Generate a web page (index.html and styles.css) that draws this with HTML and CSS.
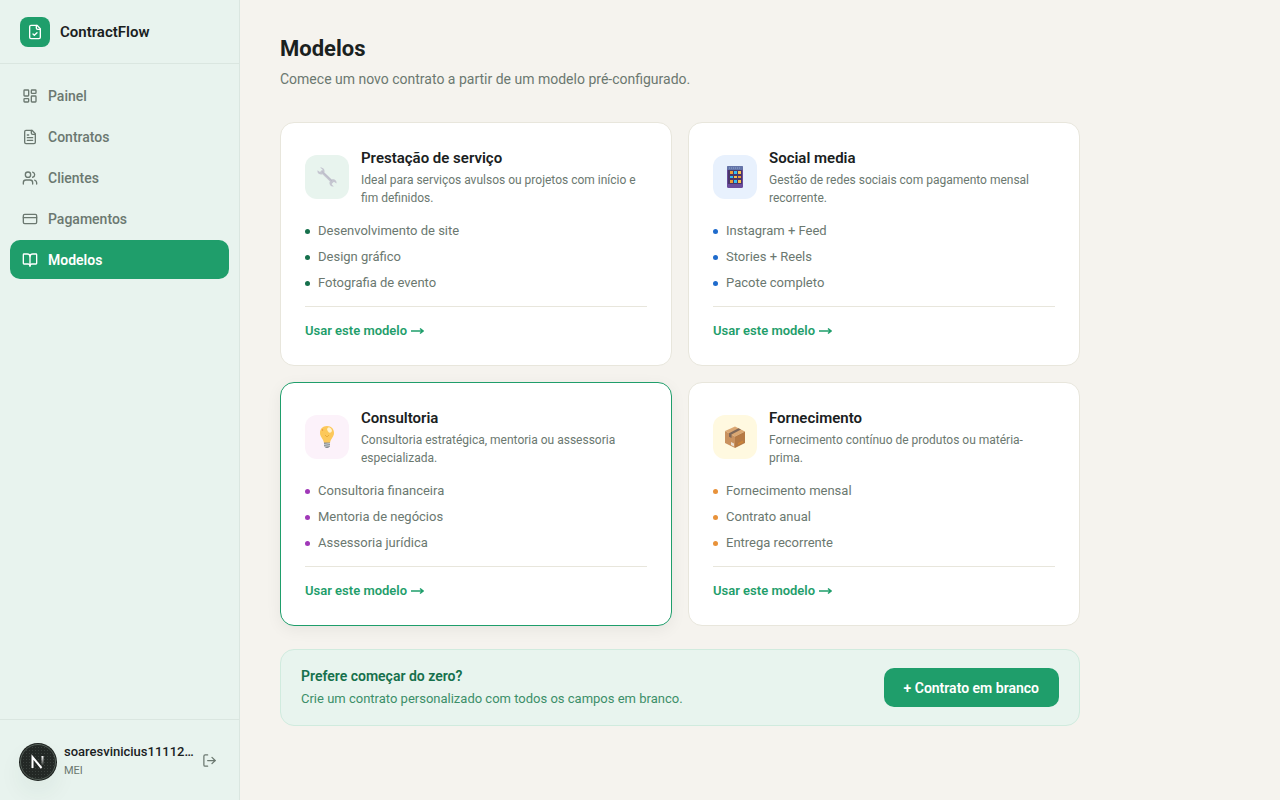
FILE: index.html
```html
<!DOCTYPE html>
<html lang="pt-BR">
<head>
    <meta charset="UTF-8">
    <meta name="viewport" content="width=device-width, initial-scale=1.0">
    <title>ContractFlow - Modelos</title>
    <link rel="stylesheet" href="styles.css">
</head>
<body>

<aside class="sidebar">
    <div class="brand">
        <span class="brand-logo">
            <svg class="icon" width="16" height="16" viewBox="0 0 24 24"><path d="M15 2H6a2 2 0 0 0-2 2v16a2 2 0 0 0 2 2h12a2 2 0 0 0 2-2V7Z"/><path d="M14 2v4a2 2 0 0 0 2 2h4"/><path d="m9 15 2 2 4-4"/></svg>
        </span>
        <span class="brand-name">ContractFlow</span>
    </div>

    <nav class="nav">
        <a href="#painel">
            <svg class="icon" width="16" height="16" viewBox="0 0 24 24"><rect x="3" y="3" width="7" height="9" rx="1"/><rect x="14" y="3" width="7" height="5" rx="1"/><rect x="14" y="12" width="7" height="9" rx="1"/><rect x="3" y="16" width="7" height="5" rx="1"/></svg>
            Painel
        </a>
        <a href="#contratos">
            <svg class="icon" width="16" height="16" viewBox="0 0 24 24"><path d="M15 2H6a2 2 0 0 0-2 2v16a2 2 0 0 0 2 2h12a2 2 0 0 0 2-2V7Z"/><path d="M14 2v4a2 2 0 0 0 2 2h4"/><path d="M10 9H8"/><path d="M16 13H8"/><path d="M16 17H8"/></svg>
            Contratos
        </a>
        <a href="#clientes">
            <svg class="icon" width="16" height="16" viewBox="0 0 24 24"><path d="M16 21v-2a4 4 0 0 0-4-4H6a4 4 0 0 0-4 4v2"/><circle cx="9" cy="7" r="4"/><path d="M22 21v-2a4 4 0 0 0-3-3.87"/><path d="M16 3.13a4 4 0 0 1 0 7.75"/></svg>
            Clientes
        </a>
        <a href="#pagamentos">
            <svg class="icon" width="16" height="16" viewBox="0 0 24 24"><rect x="2" y="5" width="20" height="14" rx="2"/><path d="M2 10h20"/></svg>
            Pagamentos
        </a>
        <a href="#modelos" class="active">
            <svg class="icon" width="16" height="16" viewBox="0 0 24 24"><path d="M12 7v14"/><path d="M3 18a1 1 0 0 1-1-1V4a1 1 0 0 1 1-1h5a4 4 0 0 1 4 4 4 4 0 0 1 4-4h5a1 1 0 0 1 1 1v13a1 1 0 0 1-1 1h-6a3 3 0 0 0-3 3 3 3 0 0 0-3-3z"/></svg>
            Modelos
        </a>
    </nav>

    <div class="user">
        <button class="avatar" aria-label="Conta">
            <svg width="38" height="38" viewBox="0 0 38 38">
                <defs>
                    <pattern id="dots" width="3" height="3" patternUnits="userSpaceOnUse"><rect x="1" y="1" width="1" height="1" fill="#3a413d"/></pattern>
                    <linearGradient id="fade" x1="0" y1="0" x2="0" y2="1"><stop offset="0" stop-color="#fff"/><stop offset="1" stop-color="#fff" stop-opacity="0.1"/></linearGradient>
                </defs>
                <circle cx="19" cy="19" r="19" fill="#1c211e"/>
                <circle cx="19" cy="19" r="17.5" fill="#232825" stroke="#56615a"/>
                <circle cx="19" cy="19" r="17" fill="url(#dots)"/>
                <path d="M13.500 25V14L22.500 25" fill="none" stroke="#fff" stroke-width="2"/>
                <rect x="22.500" y="13" width="2" height="9" fill="url(#fade)"/>
            </svg>
        </button>
        <div class="user-info">
            <div class="user-name">soaresvinicius11112…</div>
            <div class="user-plan">MEI</div>
        </div>
        <button class="logout" aria-label="Sair">
            <svg class="icon" width="15" height="15" viewBox="0 0 24 24"><path d="M9 21H5a2 2 0 0 1-2-2V5a2 2 0 0 1 2-2h4"/><path d="m16 17 5-5-5-5"/><path d="M21 12H9"/></svg>
        </button>
    </div>
</aside>

<main class="content">
    <h1>Modelos</h1>
    <p class="subtitle">Comece um novo contrato a partir de um modelo pré-configurado.</p>

    <div class="cards">
        <article class="card green">
            <div class="card-head">
                <span class="card-icon">
                    <svg width="22" height="22" viewBox="0 0 22 22"><path d="M5 5 17 16.500" stroke="#c5c6d0" stroke-width="2.600"/><path d="M4 1.500 6.500 3.500 6 5.500 4 6 1.500 4.200C1 7 3 9 6.200 8.200L8.500 6C9 3.500 7 1 4 1.500Z" fill="#c5c6d0"/><path d="M17.800 20.500 15.800 18.500 16.200 16.300 18.300 16 20.500 17.500C21 14.500 18.500 12.600 16 13.300L13.500 16C13 19 15 21 17.800 20.500Z" fill="#c5c6d0"/><path d="M6 5.500 16 15.200" stroke="#b5b6c4" stroke-width="0.800"/></svg>
                </span>
                <div>
                    <h2>Prestação de serviço</h2>
                    <p>Ideal para serviços avulsos ou projetos com início e fim definidos.</p>
                </div>
            </div>
            <ul>
                <li>Desenvolvimento de site</li>
                <li>Design gráfico</li>
                <li>Fotografia de evento</li>
            </ul>
            <div class="card-foot"><a href="#usar">Usar este modelo <svg class="arrow" width="13" height="8" viewBox="0 0 13 8"><path d="M0 4h12M9 1.500 12 4 9 6.500"/></svg></a></div>
        </article>

        <article class="card blue">
            <div class="card-head">
                <span class="card-icon">
                    <svg width="22" height="22" viewBox="0 0 22 22"><rect x="3" y="0" width="16" height="22" rx="1.500" fill="#6a4c9c"/><rect x="3" y="0" width="16" height="4" rx="1" fill="#6474a8"/><path d="M5 2h12" stroke="#8fa9d2" stroke-dasharray="1 1"/><rect x="4" y="4" width="14" height="14" fill="#4a3568"/><rect x="6" y="5" width="3" height="3" fill="#ee9a36"/><rect x="10" y="5" width="3" height="3" fill="#35bdf2"/><rect x="14" y="5" width="3" height="3" fill="#fac14c"/><rect x="6" y="10" width="3" height="2" fill="#35bdf2"/><rect x="10" y="10" width="3" height="2" fill="#fac14c"/><rect x="14" y="10" width="3" height="2" fill="#ee9a36"/><rect x="6" y="14" width="3" height="3" fill="#ee9a36"/><rect x="10" y="14" width="3" height="3" fill="#35bdf2"/><rect x="14" y="14" width="3" height="3" fill="#fac14c"/></svg>
                </span>
                <div>
                    <h2>Social media</h2>
                    <p>Gestão de redes sociais com pagamento mensal recorrente.</p>
                </div>
            </div>
            <ul>
                <li>Instagram + Feed</li>
                <li>Stories + Reels</li>
                <li>Pacote completo</li>
            </ul>
            <div class="card-foot"><a href="#usar">Usar este modelo <svg class="arrow" width="13" height="8" viewBox="0 0 13 8"><path d="M0 4h12M9 1.500 12 4 9 6.500"/></svg></a></div>
        </article>

        <article class="card purple selected">
            <div class="card-head">
                <span class="card-icon">
                    <svg width="22" height="22" viewBox="0 0 22 22"><path d="M11 0C6.500 0 4 3.200 4 7c0 4 3.300 5.500 4 10h6c0.700-4.500 4-6 4-10 0-3.800-2.500-7-7-7Z" fill="#fcc85a"/><path d="M9 9 11 11 13 9" fill="none" stroke="#e9ac3c"/><ellipse cx="13.500" cy="4" rx="2" ry="2.800" fill="#fff3cf" transform="rotate(-35 13.500 4)"/><circle cx="6.500" cy="4" r="0.700" fill="#e98b3a"/><path d="M8 16.500h6v4l-2 1.500h-2l-2-1.500Z" fill="#8b8f94"/><path d="M8 18.500 14 17.500M8 20.500 14 19.500" stroke="#c9cdd0"/></svg>
                </span>
                <div>
                    <h2>Consultoria</h2>
                    <p>Consultoria estratégica, mentoria ou assessoria especializada.</p>
                </div>
            </div>
            <ul>
                <li>Consultoria financeira</li>
                <li>Mentoria de negócios</li>
                <li>Assessoria jurídica</li>
            </ul>
            <div class="card-foot"><a href="#usar">Usar este modelo <svg class="arrow" width="13" height="8" viewBox="0 0 13 8"><path d="M0 4h12M9 1.500 12 4 9 6.500"/></svg></a></div>
        </article>

        <article class="card yellow">
            <div class="card-head">
                <span class="card-icon">
                    <svg width="22" height="22" viewBox="0 0 22 22"><path d="M1 5 11 0.500 21 5.500 11 10.500Z" fill="#dba873"/><path d="M1 5 11 10.500V22L1 17Z" fill="#c9925f"/><path d="M21 5.500 11 10.500V22L21 17Z" fill="#b57a45"/><path d="M5 7.300 14.500 2.200 17 3.500 7.500 8.600V12L5 10.700Z" fill="#7f6858"/><path d="M7 16 10 17.500V20.500L7 19Z" fill="#eadfd2"/><path d="m14 17 5-2.500v2L14 19Z" fill="#cc8438"/></svg>
                </span>
                <div>
                    <h2>Fornecimento</h2>
                    <p>Fornecimento contínuo de produtos ou matéria-prima.</p>
                </div>
            </div>
            <ul>
                <li>Fornecimento mensal</li>
                <li>Contrato anual</li>
                <li>Entrega recorrente</li>
            </ul>
            <div class="card-foot"><a href="#usar">Usar este modelo <svg class="arrow" width="13" height="8" viewBox="0 0 13 8"><path d="M0 4h12M9 1.500 12 4 9 6.500"/></svg></a></div>
        </article>
    </div>

    <section class="banner">
        <div>
            <h3>Prefere começar do zero?</h3>
            <p>Crie um contrato personalizado com todos os campos em branco.</p>
        </div>
        <button class="btn">+ Contrato em branco</button>
    </section>
</main>

</body>
</html>
```
FILE: styles.css
```css
* {
    box-sizing: border-box;
}
body {
    margin: 0;
    min-height: 100vh;
    display: flex;
    background-color: #f5f3ee;
    color: #1a211e;
    font-family: Roboto, "Liberation Sans", sans-serif;
    font-size: 14px;
    line-height: 20px;
}
h1, h2, h3, p, ul {
    margin: 0;
    padding: 0;
}
button {
    font: inherit;
    border: none;
    cursor: pointer;
}
a {
    text-decoration: none;
}
.icon {
    fill: none;
    stroke: currentColor;
    stroke-width: 2;
    stroke-linecap: round;
    stroke-linejoin: round;
    flex-shrink: 0;
}

/* sidebar */
.sidebar {
    width: 240px;
    flex-shrink: 0;
    display: flex;
    flex-direction: column;
    background-color: #e8f3ee;
    border-right: 1px solid #dae6e0;
}
.brand {
    display: flex;
    align-items: center;
    gap: 10px;
    height: 64px;
    padding: 0 20px;
    border-bottom: 1px solid #dae6e0;
}
.brand-logo {
    display: flex;
    align-items: center;
    justify-content: center;
    width: 30px;
    height: 30px;
    border-radius: 8px;
    background-color: #1f9e6b;
    color: #fff;
}
.brand-name {
    font-size: 15px;
    font-weight: 600;
}
.nav {
    flex: 1;
    display: flex;
    flex-direction: column;
    gap: 2px;
    padding: 12px 10px;
}
.nav a {
    display: flex;
    align-items: center;
    gap: 10px;
    height: 39px;
    padding: 0 12px;
    border-radius: 10px;
    color: #6b7870;
    font-weight: 500;
}
.nav a.active {
    background-color: #1f9e6b;
    color: #fff;
    font-weight: 600;
}
.user {
    display: flex;
    align-items: center;
    gap: 7px;
    height: 81px;
    padding: 4px 20px 0 19px;
    border-top: 1px solid #dae6e0;
}
.avatar {
    display: flex;
    padding: 0;
    border-radius: 50%;
    background: none;
    box-shadow: 0 12px 24px rgba(31, 60, 45, 0.06);
}
.user-info {
    flex: 1;
    min-width: 0;
    padding-bottom: 3px;
    white-space: nowrap;
}
.user-name {
    font-size: 13px;
    font-weight: 500;
}
.user-plan {
    font-size: 11px;
    line-height: 18px;
    color: #6b7870;
}
.logout {
    display: flex;
    padding: 0 2px 3px;
    background: none;
    color: #6b7870;
}

/* content */
.content {
    flex: 1;
    max-width: 880px;
    padding: 32px 40px;
}
h1 {
    font-size: 22px;
    line-height: 33px;
    font-weight: 700;
}
.subtitle {
    margin: 4px 0 33px;
    color: #6b7870;
}
.cards {
    display: grid;
    grid-template-columns: 1fr 1fr;
    gap: 16px;
}
.card {
    padding: 24px;
    border: 1px solid #e8e6dc;
    border-radius: 14px;
    background-color: #fff;
}
.card.selected {
    border-color: #1f9e6b;
    box-shadow: 0 4px 16px rgba(0, 0, 0, 0.06);
}
.card-head {
    display: flex;
    align-items: center;
    gap: 12px;
}
.card-icon {
    display: flex;
    align-items: center;
    justify-content: center;
    flex-shrink: 0;
    width: 44px;
    height: 44px;
    border-radius: 12px;
}
.card h2 {
    margin-bottom: 2px;
    font-size: 15px;
    line-height: 22px;
    font-weight: 600;
}
.card p {
    font-size: 12px;
    line-height: 18px;
    color: #6b7870;
}
.card ul {
    display: flex;
    flex-direction: column;
    gap: 6px;
    margin: 14px 0 13px;
    list-style: none;
}
.card li {
    display: flex;
    align-items: center;
    gap: 8px;
    font-size: 13px;
    color: #6b7870;
}
.card li::before {
    content: "";
    width: 5px;
    height: 5px;
    border-radius: 50%;
}
.card-foot {
    padding-top: 14px;
    border-top: 1px solid #e8e6dc;
}
.card-foot a {
    display: flex;
    align-items: center;
    gap: 4px;
    font-size: 13px;
    font-weight: 600;
    color: #1f9e6b;
}
.arrow {
    fill: none;
    stroke: currentColor;
    stroke-width: 1.5;
}
.green .card-icon { background-color: #e8f4ee; }
.green li::before { background-color: #16704c; }
.blue .card-icon { background-color: #e8f1fd; }
.blue li::before { background-color: #1f6bcc; }
.purple .card-icon { background-color: #fcf2fa; }
.purple li::before { background-color: #a038b8; }
.yellow .card-icon { background-color: #fff9e0; }
.yellow li::before { background-color: #e8923a; }

/* blank contract */
.banner {
    display: flex;
    align-items: center;
    justify-content: space-between;
    gap: 20px;
    margin-top: 23px;
    padding: 16px 20px;
    border: 1px solid #d0ebde;
    border-radius: 14px;
    background-color: #e8f4ee;
}
.banner h3 {
    margin-bottom: 3px;
    font-size: 14px;
    font-weight: 600;
    color: #16704c;
}
.banner p {
    font-size: 13px;
    color: #3c8f69;
}
.btn {
    height: 39px;
    padding: 0 20px;
    border-radius: 10px;
    background-color: #1f9e6b;
    color: #fff;
    font-weight: 600;
    white-space: nowrap;
}
```
